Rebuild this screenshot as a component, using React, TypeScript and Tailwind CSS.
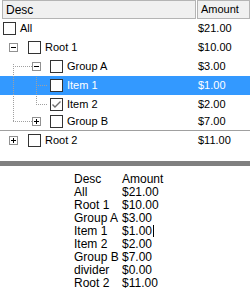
import React from 'react';

type Row = {
  desc: string;
  amount: string;
  level: 0 | 1 | 2;
  h: string;
  expand?: 'minus' | 'plus';
  checked?: boolean;
  selected?: boolean;
  kind: 'all' | 'root' | 'groupA' | 'item1' | 'item2' | 'groupB';
};

const rows: Row[] = [
  { desc: 'All', amount: '$21.00', level: 0, h: 'h-[19px]', kind: 'all' },
  { desc: 'Root 1', amount: '$10.00', level: 1, h: 'h-[19px]', expand: 'minus', kind: 'root' },
  { desc: 'Group A', amount: '$3.00', level: 2, h: 'h-[19px]', expand: 'minus', kind: 'groupA' },
  { desc: 'Item 1', amount: '$1.00', level: 2, h: 'h-[19px]', selected: true, kind: 'item1' },
  { desc: 'Item 2', amount: '$2.00', level: 2, h: 'h-[18px]', checked: true, kind: 'item2' },
  { desc: 'Group B', amount: '$7.00', level: 2, h: 'h-[17px]', expand: 'plus', kind: 'groupB' },
];

const rootTwo: Row = { desc: 'Root 2', amount: '$11.00', level: 1, h: 'h-[19px]', expand: 'plus', kind: 'root' };

const listing = [
  ['Desc', 'Amount'],
  ['All', '$21.00'],
  ['Root 1', '$10.00'],
  ['Group A', '$3.00'],
  ['Item 1', '$1.00'],
  ['Item 2', '$2.00'],
  ['Group B', '$7.00'],
  ['divider', '$0.00'],
  ['Root 2', '$11.00'],
];

// dotted tree lines, one pixel every other pixel
const hDots = (x1: number, x2: number, y: number) => {
  const out = [];
  for (let x = x1; x <= x2; x += 2) out.push(<rect key={`h${x}-${y}`} x={x} y={y} width={1} height={1} fill="#a0a0a0" />);
  return out;
};
const vDots = (x: number, y1: number, y2: number) => {
  const out = [];
  for (let y = y1; y <= y2; y += 2) out.push(<rect key={`v${x}-${y}`} x={x} y={y} width={1} height={1} fill="#a0a0a0" />);
  return out;
};

const ExpandBox: React.FC<{ x: number; y: number; type: 'minus' | 'plus' }> = ({ x, y, type }) => (
  <g>
    <rect x={x + 0.5} y={y + 0.5} width={8} height={8} fill="#fff" stroke="#919191" />
    <rect x={x + 2} y={y + 4} width={5} height={1} fill="#000" />
    {type === 'plus' && <rect x={x + 4} y={y + 2} width={1} height={5} fill="#000" />}
  </g>
);

const Gutter: React.FC<{ row: Row; height: number }> = ({ row, height }) => {
  const c = Math.floor(height / 2);
  if (row.level === 0) return null;
  if (row.level === 1) {
    return (
      <svg width={25} height={height} className="shrink-0">
        <ExpandBox x={6} y={c - 4} type={row.expand!} />
      </svg>
    );
  }
  return (
    <svg width={47} height={height} className="shrink-0">
      {row.kind === 'groupA' && (
        <>
          {vDots(10, c - 2, height - 1)}
          {hDots(10, 28, c)}
          <ExpandBox x={29} y={c - 4} type="minus" />
        </>
      )}
      {row.kind === 'item1' && (
        <>
          {vDots(10, 0, height - 1)}
          {vDots(33, 1, height - 1)}
          {hDots(33, 43, c)}
        </>
      )}
      {row.kind === 'item2' && (
        <>
          {vDots(10, 1, height - 1)}
          {vDots(33, 1, c)}
          {hDots(33, 43, c)}
        </>
      )}
      {row.kind === 'groupB' && (
        <>
          {vDots(10, 1, c)}
          {hDots(10, 28, c)}
          <ExpandBox x={29} y={c - 4} type="plus" />
        </>
      )}
    </svg>
  );
};

const CheckBox: React.FC<{ checked?: boolean }> = ({ checked }) => (
  <div className="w-[13px] h-[13px] shrink-0 border border-[#333333] bg-white flex items-center justify-center">
    {checked && (
      <svg width={11} height={11} viewBox="0 0 11 11">
        <path d="M1.5 5.5 L4 8 L9.5 2.5" fill="none" stroke="#6e6e6e" strokeWidth={1.4} />
      </svg>
    )}
  </div>
);

const heightOf = (h: string) => parseInt(h.replace(/\D/g, ''), 10);

const TreeRow: React.FC<{ row: Row }> = ({ row }) => (
  <div className={`flex ${row.h} ${row.selected ? 'bg-[#3399ff] text-white' : 'text-black'}`}>
    <div className="w-[196px] flex items-center pl-[3px]">
      <Gutter row={row} height={heightOf(row.h)} />
      <CheckBox checked={row.checked} />
      <span className="ml-[4px] whitespace-nowrap">{row.desc}</span>
    </div>
    <div className="flex-1 flex items-center pl-[2px] whitespace-nowrap">{row.amount}</div>
  </div>
);

export default function App() {
  return (
    <div className="w-[250px] h-[305px] bg-white overflow-hidden text-[11px] leading-none text-black" style={{ fontFamily: '"Liberation Sans", Arial, sans-serif' }}>
      <div className="h-[161px] flex flex-col">
        <div className="flex h-[19px] pl-[2px]">
          <div className="w-[194px] bg-[#f0f0f0] border border-[#b4b4b4] flex items-center pl-[3px] text-[12px]">Desc</div>
          <div className="flex-1 ml-[1px] bg-[#f0f0f0] border border-[#b4b4b4] flex items-center pl-[3px]">Amount</div>
        </div>
        {rows.map(r => (
          <TreeRow key={r.desc} row={r} />
        ))}
        <div className="h-[1px] bg-[#a0a0a0]" />
        <TreeRow row={rootTwo} />
      </div>
      <div className="h-[5px] bg-[#808080]" />
      <div className="pt-[6px] pl-[74px] text-[12px]">
        {listing.map(([d, a]) => (
          <div key={d} className="flex h-[13px] items-center">
            <span className="w-[48px] whitespace-nowrap">{d}</span>
            <span className="whitespace-nowrap">{a}</span>
            {d === 'Item 1' && <span className="w-[1px] h-[12px] bg-black ml-[1px]" />}
          </div>
        ))}
      </div>
    </div>
  );
}
